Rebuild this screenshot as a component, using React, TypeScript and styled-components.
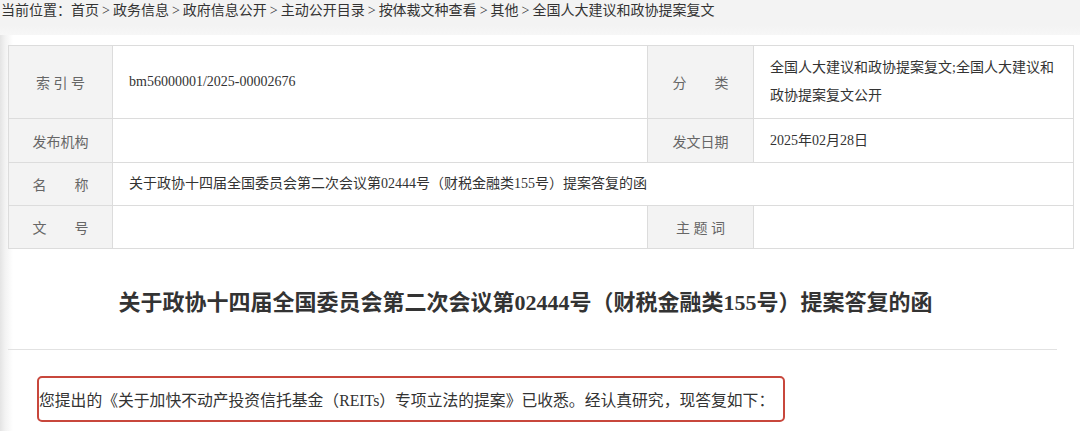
import React from "react";
import styled, { createGlobalStyle } from "styled-components";

const GlobalStyle = createGlobalStyle`
  html, body {
    margin: 0;
    padding: 0;
    background: #ffffff;
    font-family: "Liberation Serif", "Noto Sans CJK SC", serif;
    color: #333;
  }
`;

const Page = styled.div`
  width: 1080px;
  height: 431px;
  overflow: hidden;
  background: #fff;
`;

const Breadcrumb = styled.div`
  height: 35px;
  background: linear-gradient(to bottom, #f3f3f3 0, #f3f3f3 26px, #f7f7f7 35px);
  font-size: 14px;
  line-height: 22px;
  color: #333;
  padding: 0 0 0 1px;
  white-space: nowrap;
`;

const Sep = styled.span`
  margin: 0 3px;
`;

const Content = styled.div`
  padding: 10px 7px 0 8px;
  height: 396px;
  background: linear-gradient(to right, #e4e4e4 0, #f2f2f2 5px, #ffffff 13px);
`;

const Table = styled.table`
  width: 1065px;
  border-collapse: collapse;
  table-layout: fixed;
  font-size: 14px;
  background: #fff;
`;

const Row = styled.tr<{ $h: number }>`
  height: ${(p) => p.$h}px;
`;

const Label = styled.td`
  border: 1px solid #dcdcdc;
  background: #f3f3f3;
  color: #666;
  text-align: center;
  padding: 0;
  white-space: pre;
`;

const Value = styled.td`
  border: 1px solid #dcdcdc;
  color: #333;
  padding: 0 16px;
  line-height: 28px;
`;

const TitleBlock = styled.div`
  height: 100px;
  display: flex;
  align-items: center;
  justify-content: center;
  border-bottom: 1px solid #e2e2e2;
  margin-right: 16px;
`;

const Title = styled.h1`
  margin: 2px 14px 0 0;
  font-size: 22px;
  font-weight: bold;
  color: #333;
`;

const Highlight = styled.div`
  margin: 26px 0 0 29px;
  width: 744px;
  height: 42px;
  border: 2px solid #c8473c;
  border-radius: 5px;
  display: flex;
  align-items: center;
  font-size: 15.8px;
  color: #333;
  white-space: nowrap;
  overflow: hidden;
`;

const crumbs = [
  "首页",
  "政务信息",
  "政府信息公开",
  "主动公开目录",
  "按体裁文种查看",
  "其他",
  "全国人大建议和政协提案复文",
];

export default function App() {
  return (
    <Page>
      <GlobalStyle />
      <Breadcrumb>
        当前位置：
        {crumbs.map((c, i) => (
          <React.Fragment key={c}>
            {i > 0 && <Sep>&gt;</Sep>}
            {c}
          </React.Fragment>
        ))}
      </Breadcrumb>
      <Content>
        <Table>
          <colgroup>
            <col style={{ width: 104 }} />
            <col style={{ width: 535 }} />
            <col style={{ width: 106 }} />
            <col style={{ width: 320 }} />
          </colgroup>
          <tbody>
            <Row $h={73}>
              <Label>索 引 号</Label>
              <Value>bm56000001/2025-00002676</Value>
              <Label>分　　类</Label>
              <Value>
                全国人大建议和政协提案复文;全国人大建议和
                <br />
                政协提案复文公开
              </Value>
            </Row>
            <Row $h={44}>
              <Label>发布机构</Label>
              <Value />
              <Label>发文日期</Label>
              <Value>2025年02月28日</Value>
            </Row>
            <Row $h={43}>
              <Label>名　　称</Label>
              <Value colSpan={3}>
                关于政协十四届全国委员会第二次会议第02444号（财税金融类155号）提案答复的函
              </Value>
            </Row>
            <Row $h={43}>
              <Label>文　　号</Label>
              <Value />
              <Label>主 题 词</Label>
              <Value />
            </Row>
          </tbody>
        </Table>
        <TitleBlock>
          <Title>关于政协十四届全国委员会第二次会议第02444号（财税金融类155号）提案答复的函</Title>
        </TitleBlock>
        <Highlight>
          您提出的《关于加快不动产投资信托基金（REITs）专项立法的提案》已收悉。经认真研究，现答复如下：
        </Highlight>
      </Content>
    </Page>
  );
}
